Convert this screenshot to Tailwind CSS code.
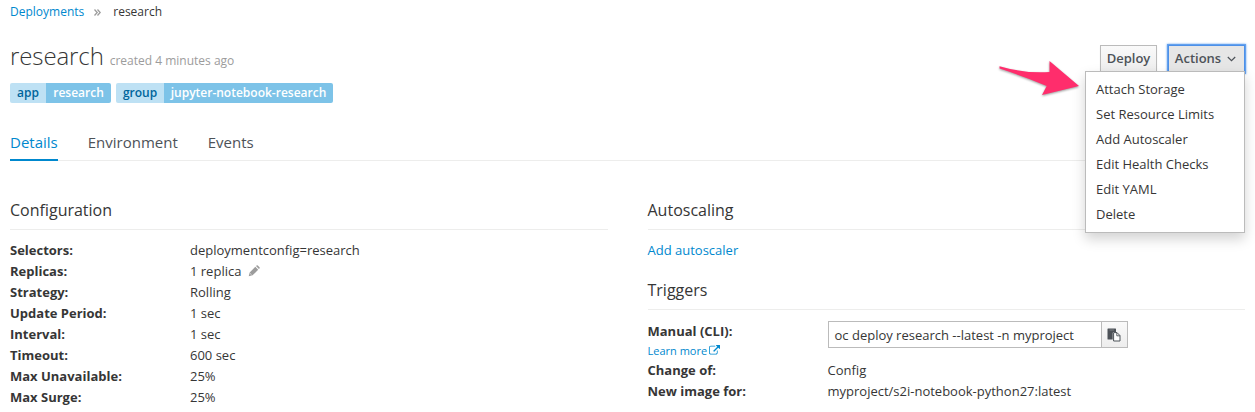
<!DOCTYPE html>
<html lang="en">
<head>
<meta charset="utf-8">
<title>research</title>
<script src="https://cdn.jsdelivr.net/npm/@tailwindcss/browser@4"></script>
</head>
<body class="bg-white text-[#363636] font-['Open_Sans',sans-serif] text-[13px] leading-[21px] w-[1255px] h-[412px] overflow-hidden">
<div class="relative pl-[10px] pr-[10px]">
  <nav class="flex items-center h-6 text-xs">
    <a class="text-[#0088ce]">Deployments</a>
    <svg class="ml-[10px] mr-[12px] mt-px" width="7" height="7" viewBox="0 0 7 7" fill="none" stroke="#9c9c9c" stroke-width="1.3"><path d="M.5.5l2.700 3-2.700 3M3.500.5l2.700 3-2.700 3"/></svg>
    <span>research</span>
  </nav>
  <header class="flex justify-between h-[58px] pt-[21px]">
    <h1 class="flex items-baseline -mt-[2px] h-[26px] text-[24px] leading-[26px] font-light tracking-[-0.1px]">research<small class="ml-[6px] text-xs tracking-normal text-[#9c9c9c] font-normal">created 4 minutes ago</small></h1>
    <div class="flex gap-[11px] text-[#4d5258] text-[13px] font-semibold">
      <button class="w-[57px] h-[28px] pb-px border border-[#bbb] bg-linear-to-b from-[#fafafa] to-[#ededed] shadow-xs">Deploy</button>
      <button class="flex items-center justify-center gap-[6px] w-[77px] h-[28px] pb-px pr-[2px] border border-[#4d90e8] bg-[#e6e6e6] shadow-[0_0_0_1px_#63a1ee,0_0_2px_1px_#63a1ee]">Actions<svg width="9" height="6" viewBox="0 0 9 6" fill="none" stroke="#4d5258" stroke-width="1.2"><path d="M.8 1L4.500 4.700 8.200 1"/></svg></button>
    </div>
  </header>
  <div class="flex gap-[5px] mt-px h-5 text-xs leading-5 font-semibold">
    <div class="flex rounded-xs overflow-hidden"><span class="w-9 text-center bg-[#bee1f4] text-[#00659c]">app</span><span class="w-[65px] text-center bg-[#7dc3e8] text-white">research</span></div>
    <div class="flex rounded-xs overflow-hidden"><span class="w-12 text-center bg-[#bee1f4] text-[#00659c]">group</span><span class="w-[169px] text-center bg-[#7dc3e8] text-white">jupyter-notebook-research</span></div>
  </div>
  <div class="flex gap-[30px] mt-[22px] h-9 border-b border-[#ededec] text-[15px] leading-[34px] text-[#4d5258]">
    <span class="h-9 border-b-2 border-[#0088ce] text-[#0088ce]">Details</span><span>Environment</span><span>Events</span>
  </div>
  <main class="grid grid-cols-[598px_597.5px] gap-x-[39.5px] mt-[37px]">
    <section>
      <h2 class="h-[32px] border-b border-[#ededec] text-base leading-6">Configuration</h2>
      <dl class="grid grid-cols-[180px_1fr] mt-[10px] [&>dt]:font-bold">
        <dt>Selectors:</dt><dd>deploymentconfig=research</dd>
        <dt>Replicas:</dt><dd class="flex items-center">1 replica<svg class="ml-[7px] -mt-px" width="12" height="12" viewBox="0 0 12 12"><path d="M.7 11.300l1-3.900L7.300 1.800l2.900 2.900L4.600 10.300zM8 1.100l.6-.6q.6-.5 1.200 0l1.700 1.700q.5.6 0 1.200l-.6.6z" fill="#9c9c9c"/><path d="M2.200 8.500l1.300 1.300" stroke="#fff" stroke-width=".7"/></svg></dd>
        <dt>Strategy:</dt><dd>Rolling</dd>
        <dt>Update Period:</dt><dd>1 sec</dd>
        <dt>Interval:</dt><dd>1 sec</dd>
        <dt>Timeout:</dt><dd>600 sec</dd>
        <dt>Max Unavailable:</dt><dd>25%</dd>
        <dt>Max Surge:</dt><dd>25%</dd>
      </dl>
    </section>
    <section>
      <h2 class="h-[32px] border-b border-[#ededec] text-base leading-6">Autoscaling</h2>
      <a class="block mt-[10px] text-[#0088ce] font-medium">Add autoscaler</a>
      <h2 class="mt-[17px] h-[32px] border-b border-[#ededec] text-base leading-6">Triggers</h2>
      <dl class="grid grid-cols-[180px_1fr] mt-[11px] [&>dt]:font-bold">
        <dt class="h-[39px]">Manual (CLI):
          <a class="flex items-center h-[17px] pt-px text-[11px] leading-4 font-normal text-[#0088ce]">Learn more<svg class="ml-[2px] -mt-px" width="11" height="11" viewBox="0 0 1792 1792" fill="#0088ce"><path d="M1408 928v320q0 119-84.500 203.500t-203.500 84.500h-832q-119 0-203.500-84.500t-84.500-203.500v-832q0-119 84.500-203.500t203.500-84.500h704q14 0 23 9t9 23v64q0 14-9 23t-23 9h-704q-66 0-113 47t-47 113v832q0 66 47 113t113 47h832q66 0 113-47t47-113v-320q0-14 9-23t23-9h64q14 0 23 9t9 23zm384-864v512q0 26-19 45t-45 19-45-19l-176-176-652 652q-10 10-23 10t-23-10l-114-114q-10-10-10-23t10-23l652-652-176-176q-19-19-19-45t19-45 45-19h512q26 0 45 19t19 45z"/></svg></a>
        </dt>
        <dd class="flex w-[300px] h-[27px] border border-[#bbb]"><span class="flex-1 pl-[6px] leading-[26px]">oc deploy research --latest -n myproject</span><span class="grid place-items-center w-[26px] border-l border-[#bbb] bg-linear-to-b from-[#fafafa] to-[#ededed]"><svg width="14" height="14" viewBox="0 0 14 14"><path d="M.5 1q0-.5.5-.5H8.500q.5 0 .5.500V4H7q-1.300 0-1.300 1.300V11.500H1q-.5 0-.5-.5z" fill="#4d5258"/><path d="M2.500 2h4.500" stroke="#9a9da1" stroke-width=".6"/><path d="M6.600 4.600H10L13 7.600V13H6.600z" fill="#fff" stroke="#4d5258"/><path d="M9.800 4.600v3.200H13" fill="none" stroke="#4d5258" stroke-width=".9"/></svg></span></dd>
        <dt>Change of:</dt><dd>Config</dd>
        <dt>New image for:</dt><dd>myproject/s2i-notebook-python27:latest</dd>
      </dl>
    </section>
  </main>
  <ul class="absolute left-[1085px] top-[71px] w-[160px] h-[162px] pt-[5px] pl-[10px] border border-[#bbb] bg-white shadow-[0_6px_12px_rgba(0,0,0,0.175)] leading-[25px]">
    <li>Attach Storage</li><li>Set Resource Limits</li><li>Add Autoscaler</li><li>Edit Health Checks</li><li>Edit YAML</li><li>Delete</li>
  </ul>
  <svg class="absolute left-[995px] top-[55px] drop-shadow-[0_1px_1px_rgba(0,0,0,0.4)]" width="90" height="46" viewBox="0 0 90 46"><path d="M4.500 11.300Q28 18.500 54.500 17L54.500 6 84 31 47 40 51.700 31Q31 22 4.500 13.500Z" fill="#ff2d6c"/></svg>
</div>
</body>
</html>
